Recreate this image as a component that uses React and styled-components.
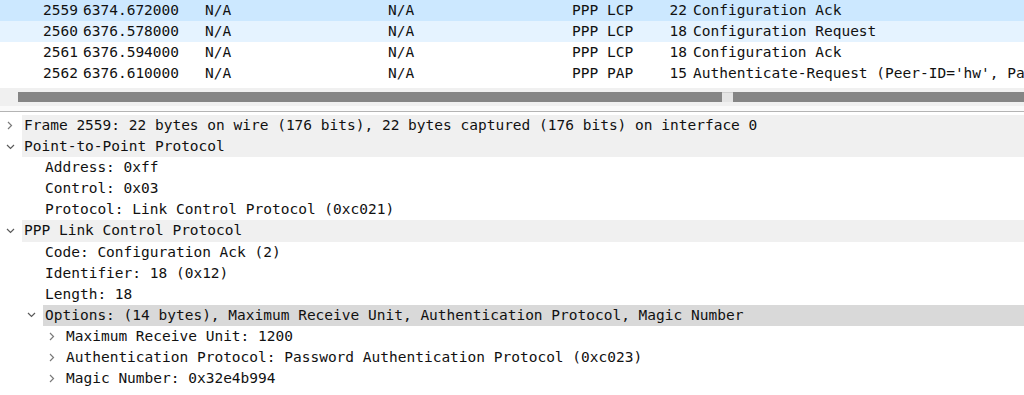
import React from 'react'
import styled, { createGlobalStyle } from 'styled-components'

const GlobalStyle = createGlobalStyle`
  html, body {
    margin: 0;
    padding: 0;
    background: #ffffff;
  }
  body {
    font-family: "DejaVu Sans Mono", "Liberation Mono", monospace;
    font-size: 14.5px;
    color: #111;
  }
`

const packets = [
  { no: 2559, time: '6374.672000', src: 'N/A', dst: 'N/A', proto: 'PPP LCP', len: 22, info: 'Configuration Ack', state: 'selected' },
  { no: 2560, time: '6376.578000', src: 'N/A', dst: 'N/A', proto: 'PPP LCP', len: 18, info: 'Configuration Request', state: 'hover' },
  { no: 2561, time: '6376.594000', src: 'N/A', dst: 'N/A', proto: 'PPP LCP', len: 18, info: 'Configuration Ack' },
  { no: 2562, time: '6376.610000', src: 'N/A', dst: 'N/A', proto: 'PPP PAP', len: 15, info: "Authenticate-Request (Peer-ID='hw', Pa" },
]

const tree = [
  { level: 0, arrow: 'right', text: 'Frame 2559: 22 bytes on wire (176 bits), 22 bytes captured (176 bits) on interface 0', tone: 'top' },
  { level: 0, arrow: 'down', text: 'Point-to-Point Protocol', tone: 'top' },
  { level: 1, text: 'Address: 0xff' },
  { level: 1, text: 'Control: 0x03' },
  { level: 1, text: 'Protocol: Link Control Protocol (0xc021)' },
  { level: 0, arrow: 'down', text: 'PPP Link Control Protocol', tone: 'top' },
  { level: 1, text: 'Code: Configuration Ack (2)' },
  { level: 1, text: 'Identifier: 18 (0x12)' },
  { level: 1, text: 'Length: 18' },
  { level: 1, arrow: 'down', text: 'Options: (14 bytes), Maximum Receive Unit, Authentication Protocol, Magic Number', tone: 'selected' },
  { level: 2, arrow: 'right', text: 'Maximum Receive Unit: 1200' },
  { level: 2, arrow: 'right', text: 'Authentication Protocol: Password Authentication Protocol (0xc023)' },
  { level: 2, arrow: 'right', text: 'Magic Number: 0x32e4b994' },
]

const rowColors = {
  selected: '#cce8ff',
  hover: '#e5f3ff',
}

const labelColors = {
  top: '#f0f0f0',
  selected: '#d9d9d9',
}

export default function App() {
  return (
    <>
      <GlobalStyle />
      <Window>
        <PacketList>
          {packets.map((p) => (
            <PacketRow key={p.no} $state={p.state}>
              <Cell $w={80} $right>{p.no}</Cell>
              <Cell $w={122}>{p.time}</Cell>
              <Cell $w={183}>{p.src}</Cell>
              <Cell $w={184}>{p.dst}</Cell>
              <Cell $w={88}>{p.proto}</Cell>
              <Cell $w={32} $right>{p.len}</Cell>
              <InfoCell>{p.info}</InfoCell>
            </PacketRow>
          ))}
        </PacketList>

        <HScroll>
          <ScrollLead />
          <Thumb $w={704} />
          <ThumbNotch />
          <Thumb />
        </HScroll>

        <Splitter />

        <DetailTree>
          {tree.map((n, i) => (
            <TreeRow key={i} $level={n.level}>
              <Toggle>
                {n.arrow === 'right' && (
                  <svg width="6" height="9" viewBox="0 0 6 9">
                    <path d="M1 1 L4.5 4.5 L1 8" fill="none" stroke="#7a7a7a" strokeWidth="1.2" />
                  </svg>
                )}
                {n.arrow === 'down' && (
                  <svg width="9" height="6" viewBox="0 0 9 6">
                    <path d="M1 1 L4.5 4.5 L8 1" fill="none" stroke="#5a5a5a" strokeWidth="1.2" />
                  </svg>
                )}
              </Toggle>
              <Label $tone={n.tone}>{n.text}</Label>
            </TreeRow>
          ))}
        </DetailTree>
      </Window>
    </>
  )
}

const Window = styled.div`
  width: 1024px;
  height: 395px;
  overflow: hidden;
  display: flex;
  flex-direction: column;
  background: #fff;
`

const PacketList = styled.div`
  height: 88px;
  display: flex;
  flex-direction: column;
`

const PacketRow = styled.div`
  display: flex;
  height: 21px;
  line-height: 21px;
  white-space: nowrap;
  background: ${(p) => rowColors[p.$state] || '#fff'};
`

const Cell = styled.div`
  flex: 0 0 ${(p) => p.$w}px;
  box-sizing: border-box;
  padding: ${(p) => (p.$right ? '0 2px 0 0' : '0 0 0 3px')};
  text-align: ${(p) => (p.$right ? 'right' : 'left')};
  overflow: hidden;
`

const InfoCell = styled.div`
  flex: 1;
  padding-left: 4px;
  overflow: hidden;
`

const HScroll = styled.div`
  height: 18px;
  box-sizing: border-box;
  padding: 4px 0;
  display: flex;
  background: #f0f0f0;
`

const ScrollLead = styled.div`
  flex: 0 0 18px;
`

const Thumb = styled.div`
  ${(p) => (p.$w ? `flex: 0 0 ${p.$w}px;` : 'flex: 1;')}
  background: #858585;
`

const ThumbNotch = styled.div`
  flex: 0 0 11px;
  background: #e4e4e4;
  border-top: 1px solid #cfcfcf;
  box-sizing: border-box;
`

const Splitter = styled.div`
  height: 6px;
  border-bottom: 1px solid #b4b4b4;
  box-sizing: border-box;
  background: #fafafa;
`

const DetailTree = styled.div`
  padding-top: 3px;
  display: flex;
  flex-direction: column;
`

const TreeRow = styled.div`
  display: flex;
  align-items: stretch;
  height: 21.1px;
  padding-left: ${(p) => p.$level * 21}px;
  white-space: nowrap;
`

const Toggle = styled.div`
  flex: 0 0 22px;
  display: flex;
  align-items: center;
  justify-content: center;
  padding-right: 2px;
  box-sizing: border-box;
`

const Label = styled.div`
  flex: 1;
  padding-left: 2px;
  line-height: 21px;
  background: ${(p) => labelColors[p.$tone] || 'transparent'};
`
